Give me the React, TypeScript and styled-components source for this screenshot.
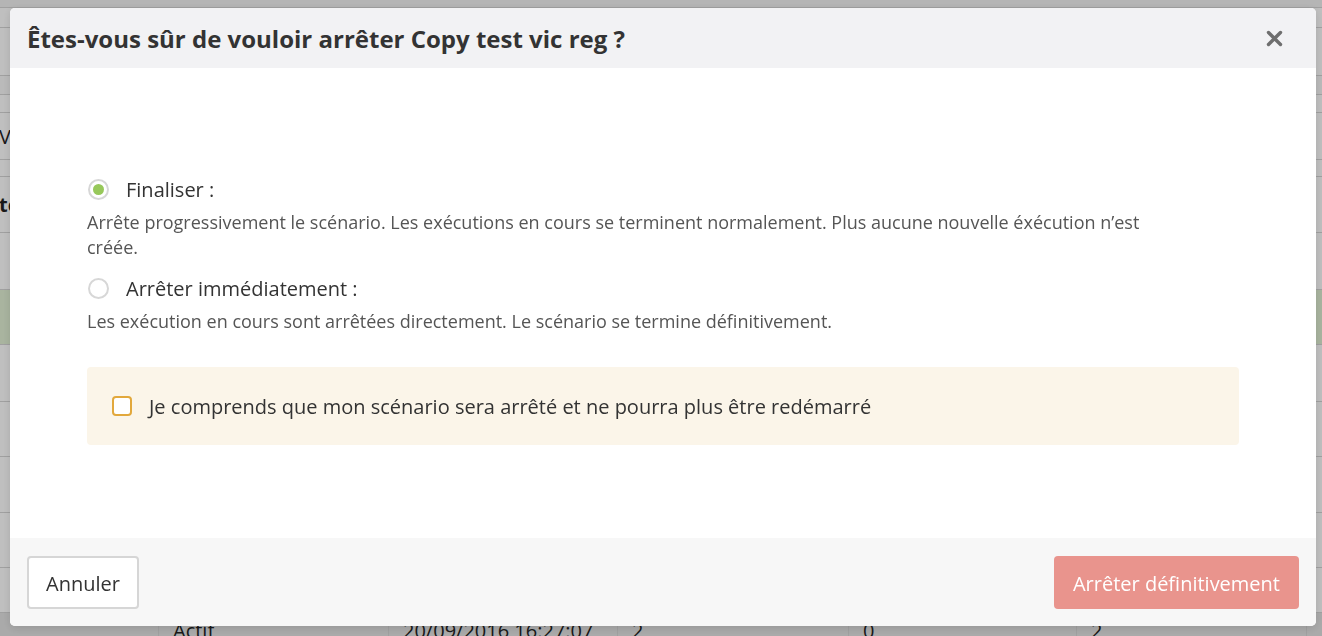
import React, { useState } from "react";
import styled, { createGlobalStyle } from "styled-components";

const Global = createGlobalStyle`
  html, body { margin: 0; padding: 0; }
  body { font-family: "Open Sans", "Noto Sans", sans-serif; background: #fff; overflow: hidden; }
  * { box-sizing: border-box; }
`;

const Page = styled.div`
  width: 1322px;
  height: 636px;
  overflow: hidden;
  display: flex;
  flex-direction: column;
  background: #fff;
`;

const BgRow = styled.div<{ $h: number; $bg?: string }>`
  height: ${(p) => p.$h}px;
  flex: none;
  display: flex;
  background: ${(p) => p.$bg || "#fff"};
  border-bottom: 1px solid #d6d6d6;
  font-size: 20px;
  color: #222;
`;

const BgCell = styled.div<{ $w: number }>`
  width: ${(p) => p.$w}px;
  flex: none;
  border-right: 1px solid #d6d6d6;
  padding: 4px 0 0 14px;
  white-space: nowrap;
  overflow: hidden;
`;

const EdgeText = styled.div<{ $bold?: boolean }>`
  font-size: 20px;
  font-weight: ${(p) => (p.$bold ? 700 : 400)};
  display: flex;
  align-items: center;
  height: 100%;
  flex: 1;
  margin-left: -1px;
`;

const Dots = styled.div`
  margin-left: auto;
  width: 6px;
  color: #3b6fb0;
  font-size: 18px;
  font-weight: 700;
  display: flex;
  align-items: center;
`;

const Overlay = styled.div`
  position: fixed;
  inset: 0;
  background: rgba(0, 0, 0, 0.25);
  display: flex;
  align-items: flex-start;
  justify-content: center;
  padding: 8px 6px 10px 10px;
`;

const Modal = styled.div`
  width: 1306px;
  height: 618px;
  background: #fff;
  border-radius: 5px;
  display: flex;
  flex-direction: column;
  overflow: hidden;
  box-shadow: 0 2px 8px rgba(0, 0, 0, 0.12);
`;

const Header = styled.div`
  height: 60px;
  flex: none;
  background: #f2f2f4;
  display: flex;
  align-items: center;
  padding: 0 32px 0 17px;
`;

const Title = styled.h2`
  margin: 0;
  font-size: 24px;
  font-weight: 700;
  color: #333;
  flex: 1;
`;

const Close = styled.button`
  border: none;
  background: none;
  padding: 0;
  width: 20px;
  height: 20px;
  display: flex;
  align-items: center;
  justify-content: center;
  cursor: pointer;
`;

const Body = styled.div`
  flex: 1;
  padding: 108px 77px 0 77px;
  display: flex;
  flex-direction: column;
`;

const Option = styled.label`
  display: flex;
  align-items: center;
  gap: 17px;
  font-size: 20px;
  color: #333;
  height: 26px;
  cursor: pointer;
`;

const RadioMark = styled.span<{ $on?: boolean }>`
  width: 21px;
  height: 21px;
  margin-left: 1px;
  border-radius: 50%;
  border: 2px solid #d7d7d7;
  background: #fff;
  display: flex;
  align-items: center;
  justify-content: center;
  &::after {
    content: "";
    width: 11px;
    height: 11px;
    border-radius: 50%;
    background: ${(p) => (p.$on ? "#97c85a" : "transparent")};
  }
`;

const Desc = styled.p<{ $mb: number }>`
  margin: 8px 0 ${(p) => p.$mb}px 0;
  max-width: 1080px;
  font-size: 18px;
  line-height: 25px;
  color: #555;
`;

const Warning = styled.div`
  background: #fbf5e9;
  border-radius: 4px;
  height: 78px;
  display: flex;
  align-items: center;
  padding: 0 25px;
  gap: 17px;
  font-size: 20px;
  color: #333;
  cursor: pointer;
`;

const CheckBox = styled.span<{ $on?: boolean }>`
  width: 20px;
  height: 20px;
  border: 2px solid #e2a83c;
  border-radius: 4px;
  background: ${(p) => (p.$on ? "#e2a83c" : "#fff")};
  flex: none;
`;

const Footer = styled.div`
  height: 88px;
  flex: none;
  background: #f7f7f7;
  display: flex;
  align-items: flex-start;
  justify-content: space-between;
  padding: 18px 17px 0 17px;
`;

const Button = styled.button<{ $danger?: boolean }>`
  height: 53px;
  padding: 1px ${(p) => (p.$danger ? 19 : 17)}px 0;
  border-radius: 4px;
  font-family: "Open Sans", "Noto Sans", sans-serif;
  font-size: 20px;
  cursor: pointer;
  border: ${(p) => (p.$danger ? "none" : "2px solid #d6d6d6")};
  background: ${(p) => (p.$danger ? "#e9948d" : "#fff")};
  color: ${(p) => (p.$danger ? "#fff" : "#333")};
`;

const rows: { h: number; bg?: string; edge?: string; bold?: boolean; dots?: boolean }[] = [
  { h: 8, bg: "#f2f2f2" },
  { h: 20 },
  { h: 48 },
  { h: 19, bg: "#f8f8f8" },
  { h: 18 },
  { h: 47, edge: "V" },
  { h: 17 },
  { h: 56, edge: "te", bold: true, dots: true },
  { h: 57 },
  { h: 55, bg: "#e2f1d5" },
  { h: 57 },
  { h: 55 },
  { h: 56 },
  { h: 55 },
  { h: 45 },
];

export default function App() {
  const [mode, setMode] = useState<"final" | "now">("final");
  const [ack, setAck] = useState(false);
  return (
    <>
      <Global />
      <Page>
        {rows.map((r, i) => (
          <BgRow key={i} $h={r.h} $bg={r.bg}>
            {r.edge && <EdgeText $bold={r.bold}>{r.edge}</EdgeText>}
            {r.dots && <Dots>⋮</Dots>}
          </BgRow>
        ))}
        <BgRow $h={40} $bg="#e3e3e3">
          <BgCell $w={159}></BgCell>
          <BgCell $w={230}>Actif</BgCell>
          <BgCell $w={229}>20/09/2016 16:27:07</BgCell>
          <BgCell $w={231}>2</BgCell>
          <BgCell $w={228}>0</BgCell>
          <BgCell $w={230}>2</BgCell>
        </BgRow>
      </Page>
      <Overlay>
        <Modal>
          <Header>
            <Title>Êtes-vous sûr de vouloir arrêter Copy test vic reg ?</Title>
            <Close aria-label="Fermer">
              <svg width="17" height="17" viewBox="0 0 17 17">
                <path d="M2.5 2.5 L14.5 14.5 M14.5 2.5 L2.5 14.5" stroke="#6e6e6e" strokeWidth="3.4" strokeLinecap="round" />
              </svg>
            </Close>
          </Header>
          <Body>
            <Option onClick={() => setMode("final")}>
              <RadioMark $on={mode === "final"} />
              Finaliser :
            </Option>
            <Desc $mb={15}>
              Arrête progressivement le scénario. Les exécutions en cours se terminent normalement. Plus aucune nouvelle éxécution n’est créée.
            </Desc>
            <Option onClick={() => setMode("now")}>
              <RadioMark $on={mode === "now"} />
              Arrêter immédiatement :
            </Option>
            <Desc $mb={33}>
              Les exécution en cours sont arrêtées directement. Le scénario se termine définitivement.
            </Desc>
            <Warning onClick={() => setAck(!ack)}>
              <CheckBox $on={ack} />
              Je comprends que mon scénario sera arrêté et ne pourra plus être redémarré
            </Warning>
          </Body>
          <Footer>
            <Button>Annuler</Button>
            <Button $danger>Arrêter définitivement</Button>
          </Footer>
        </Modal>
      </Overlay>
    </>
  );
}
